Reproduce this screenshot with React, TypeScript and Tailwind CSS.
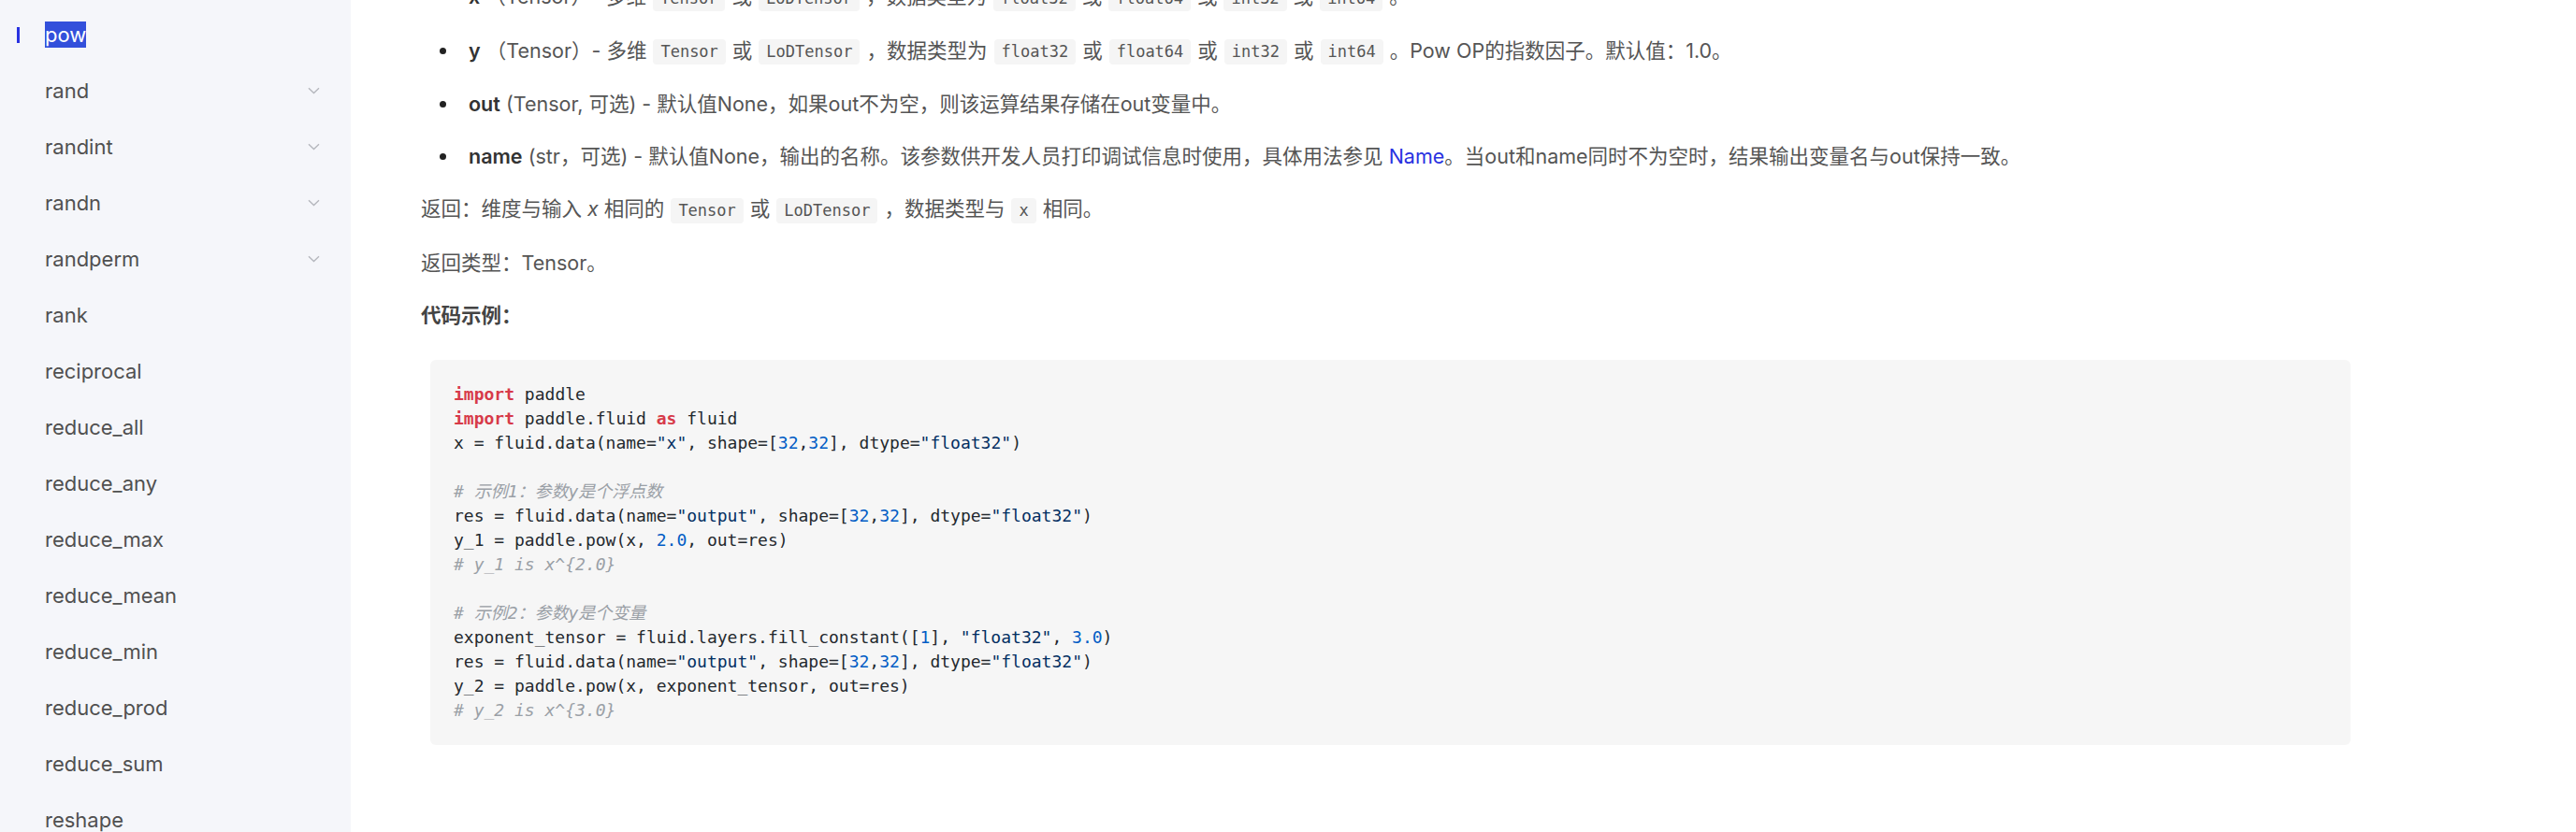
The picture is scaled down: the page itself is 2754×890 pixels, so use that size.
import React from "react";

const navItems = [
  { name: "pow", active: true },
  { name: "rand", sub: true },
  { name: "randint", sub: true },
  { name: "randn", sub: true },
  { name: "randperm", sub: true },
  { name: "rank" },
  { name: "reciprocal" },
  { name: "reduce_all" },
  { name: "reduce_any" },
  { name: "reduce_max" },
  { name: "reduce_mean" },
  { name: "reduce_min" },
  { name: "reduce_prod" },
  { name: "reduce_sum" },
  { name: "reshape" },
];

const Chevron = () => (
  <svg width="13" height="8" viewBox="0 0 13 8" fill="none">
    <path d="M1 1.2L6.5 6.5L12 1.2" stroke="#b4b6bc" strokeWidth="1.3" />
  </svg>
);

const Code = ({ children }: { children: React.ReactNode }) => (
  <code className="inline-block mx-[7px] px-[8px] h-[27px] leading-[27px] rounded-[4px] bg-[#f5f5f5] text-[17px] text-[#555] font-[family-name:'DejaVu_Sans_Mono',monospace] align-middle">
    {children}
  </code>
);

const K = ({ children }: { children: React.ReactNode }) => <span className="text-[#d73a49] font-bold">{children}</span>;
const S = ({ children }: { children: React.ReactNode }) => <span className="text-[#032f62]">{children}</span>;
const N = ({ children }: { children: React.ReactNode }) => <span className="text-[#005cc5]">{children}</span>;
const C = ({ children }: { children: React.ReactNode }) => <span className="text-[#9aa0a6] italic">{children}</span>;

const Sidebar = () => (
  <aside className="w-[375px] shrink-0 h-full bg-[#f5f6fa] pt-[7px]">
    {navItems.map((item) => (
      <div key={item.name} className="flex items-center h-[60px] pl-[18px] pr-[33px]">
        <div className="w-[30px] flex items-center">
          {item.active && <div className="w-[3px] h-[17px] bg-[#2932e1]" />}
        </div>
        <div className="flex-1 text-[22px] text-[#505050]">
          {item.active ? (
            <span className="inline-block leading-[28px] bg-[#3350db] text-white">{item.name}</span>
          ) : (
            item.name
          )}
        </div>
        {item.sub && <Chevron />}
      </div>
    ))}
  </aside>
);

const Bullet = ({ children }: { children: React.ReactNode }) => (
  <li className="flex items-center py-[14px] leading-[28px] pl-[20px]">
    <span className="w-[7px] h-[7px] rounded-full bg-[#222] mr-[24px] shrink-0" />
    <span className="whitespace-nowrap">{children}</span>
  </li>
);

export default function App() {
  return (
    <div className="flex h-[890px] w-[2754px] overflow-hidden bg-white font-[family-name:Inter,'Noto_Sans_CJK_SC',sans-serif]">
      <Sidebar />
      <main className="flex-1 pl-[75px]">
        <div className="w-[2073px] mt-[-32px] text-[21.5px] text-[#555]">
          <ul>
            <Bullet>
              <b className="font-semibold text-[#333]">x</b> （Tensor）- 多维<Code>Tensor</Code>或<Code>LoDTensor</Code>，数据类型为<Code>float32</Code>或<Code>float64</Code>或<Code>int32</Code>或<Code>int64</Code>。
            </Bullet>
            <Bullet>
              <b className="font-semibold text-[#333]">y</b> （Tensor）- 多维<Code>Tensor</Code>或<Code>LoDTensor</Code>，数据类型为<Code>float32</Code>或<Code>float64</Code>或<Code>int32</Code>或<Code>int64</Code>。Pow OP的指数因子。默认值：1.0。
            </Bullet>
            <Bullet>
              <b className="font-semibold text-[#333]">out</b> (Tensor, 可选) - 默认值None，如果out不为空，则该运算结果存储在out变量中。
            </Bullet>
            <Bullet>
              <b className="font-semibold text-[#333]">name</b> (str，可选) - 默认值None，输出的名称。该参数供开发人员打印调试信息时使用，具体用法参见 <a className="text-[#2932e1]">Name</a>。当out和name同时不为空时，结果输出变量名与out保持一致。
            </Bullet>
          </ul>
          <p className="py-[14px] leading-[28px] whitespace-nowrap">
            返回：维度与输入 <i>x</i> 相同的<Code>Tensor</Code>或<Code>LoDTensor</Code>，数据类型与<Code>x</Code>相同。
          </p>
          <p className="py-[14px] leading-[28px]">返回类型：Tensor。</p>
          <p className="py-[14px] leading-[28px] font-semibold text-[#444]">代码示例：</p>
          <pre className="mt-[20px] mx-[10px] rounded-[6px] bg-[#f6f6f6] px-[25px] py-[24px] text-[18px] leading-[26px] text-[#24292e] font-[family-name:'DejaVu_Sans_Mono','Noto_Sans_CJK_SC',monospace]">
            <K>import</K> paddle{"\n"}
            <K>import</K> paddle.fluid <K>as</K> fluid{"\n"}
            x = fluid.data(name=<S>"x"</S>, shape=[<N>32</N>,<N>32</N>], dtype=<S>"float32"</S>){"\n"}
            {"\n"}
            <C># 示例1：参数y是个浮点数</C>{"\n"}
            res = fluid.data(name=<S>"output"</S>, shape=[<N>32</N>,<N>32</N>], dtype=<S>"float32"</S>){"\n"}
            y_1 = paddle.pow(x, <N>2.0</N>, out=res){"\n"}
            <C># y_1 is x^{"{"}2.0{"}"}</C>{"\n"}
            {"\n"}
            <C># 示例2：参数y是个变量</C>{"\n"}
            exponent_tensor = fluid.layers.fill_constant([<N>1</N>], <S>"float32"</S>, <N>3.0</N>){"\n"}
            res = fluid.data(name=<S>"output"</S>, shape=[<N>32</N>,<N>32</N>], dtype=<S>"float32"</S>){"\n"}
            y_2 = paddle.pow(x, exponent_tensor, out=res){"\n"}
            <C># y_2 is x^{"{"}3.0{"}"}</C>
          </pre>
        </div>
      </main>
    </div>
  );
}
